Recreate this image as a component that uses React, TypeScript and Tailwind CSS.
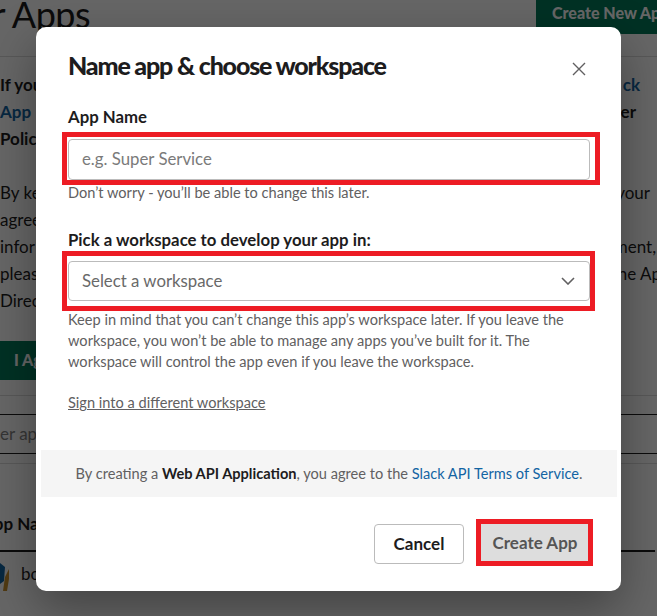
import React from 'react';

const lineClass = 'flex h-[27px] items-center justify-between text-[17px] text-[#1d1c1d]';

const App: React.FC = () => {
  return (
    <div className="relative h-[616px] w-[657px] overflow-hidden bg-white font-['Lato',sans-serif]">
      {/* Page behind the dialog */}
      <div className="flex h-[57px] items-start justify-between border-b border-[#ddd]">
        <h1 className="mt-[-4px] ml-[-65px] text-[36px] leading-[36px] font-normal tracking-[-0.5px] text-[#1d1c1d]">Your Apps</h1>
        <div className="h-[34px] w-[121px] overflow-hidden rounded-bl-sm bg-[#007a5a] pt-[1px] pl-4 text-[16px] font-black whitespace-nowrap text-white">Create New App</div>
      </div>
      <div className="pt-[14px]">
        <div className={lineClass}><span className="font-bold">If you</span><span className="mr-[17px] font-bold text-[#1264a3]">ck</span></div>
        <div className={lineClass}><span className="font-bold text-[#1264a3]">App</span><span className="mr-[21px] font-bold">er</span></div>
        <div className={lineClass}><span className="font-bold">Polic</span></div>
        <div className="h-[27px]" />
        <div className={lineClass}><span>By ke</span><span className="mr-[7px]">your</span></div>
        <div className={lineClass}><span>agree</span></div>
        <div className={lineClass}><span>infor</span><span className="mr-[1px]">ment,</span></div>
        <div className={lineClass}><span>pleas</span><span className="mr-[-8px]">he Api</span></div>
        <div className={lineClass}><span>Direc</span></div>
      </div>
      <div className="mt-[27px] flex h-[39px] w-[60px] items-center rounded-r bg-[#007a5a] pb-[2px] pl-[14px] text-[16px] font-black whitespace-nowrap text-white">I Agree</div>
      <div className="mt-[15px] h-[19px] border-t border-[#ddd]" />
      <div className="flex h-[40px] items-center border-y border-[#1d1c1d] text-[17px] text-[#868686]">er apps</div>
      <div className="h-[10px] border-b border-[#ddd]" />
      <div className="mt-[47px] mr-[2px] border-b-2 border-[#1d1c1d] pb-[13px] text-[17px] font-bold text-[#1d1c1d]">
        <span className="ml-[-18px]">App Name</span>
      </div>
      <div className="mt-[9px] flex items-center gap-[12px] text-[17px] text-[#1d1c1d]">
        <svg width="9" height="30" viewBox="0 0 9 30" className="shrink-0">
          <path d="M0 2l5 4-1 14-4 3z" fill="#1264a3" />
          <path d="M9 8v10l-2 12H3l2-14z" fill="#c9922e" />
        </svg>
        <span className="mb-[4px]">bot</span>
      </div>

      {/* Dim layer */}
      <div className="absolute inset-0 bg-black/60" />

      {/* Dialog */}
      <div className="absolute top-[27px] left-[36px] flex h-[564px] w-[585px] flex-col rounded-[10px] bg-white pr-[4px] pl-[5px] shadow-[0_18px_48px_rgba(0,0,0,0.35)]">
        <div className="flex items-start justify-between pt-[20px] pr-[31px] pl-[27px]">
          <h2 className="text-[25px] leading-[36px] font-black tracking-[-1.18px] text-[#1d1c1d]">Name app &amp; choose workspace</h2>
          <svg width="14" height="14" viewBox="0 0 14 14" className="mt-[15px]" fill="none" stroke="#616061" strokeWidth="1.4">
            <path d="M1 1l12 12M13 1L1 13" />
          </svg>
        </div>

        <div className="flex-1 px-[27px]">
          <label className="mt-[22px] block text-[16.8px] leading-[24px] font-bold text-[#1d1c1d]">App Name</label>
          <div className="relative mt-[10px]">
            <div className="flex h-[41px] items-center rounded-[4px] border border-[#bbbbbb] pb-[1px] pl-[13px] text-[16.8px] text-[#7a7a7a]">e.g. Super Service</div>
            <div className="absolute -top-[7px] -right-[10px] -bottom-[5px] -left-[6px] border-[5px] border-[#ed1c24]" />
          </div>
          <p className="mt-[2px] text-[14.6px] leading-[22px] text-[#616061]">Don’t worry - you’ll be able to change this later.</p>

          <label className="mt-[24px] block text-[16.8px] leading-[24px] font-bold text-[#1d1c1d]">Pick a workspace to develop your app in:</label>
          <div className="relative mt-[9px]">
            <div className="flex h-[40px] items-center justify-between rounded-[4px] border border-[#bbbbbb] pr-[14px] pl-[13px] text-[16.8px] text-[#696969]">
              <span>Select a workspace</span>
              <svg width="14" height="8" viewBox="0 0 14 8" fill="none" stroke="#616061" strokeWidth="1.6">
                <path d="M1 1l6 6 6-6" />
              </svg>
            </div>
            <div className="absolute -top-[10px] -right-[5px] -bottom-[10px] -left-[6px] border-[5px] border-[#ed1c24]" />
          </div>
          <p className="mt-[8px] text-[14.6px] leading-[21px] whitespace-nowrap text-[#616061]">
            Keep in mind that you can’t change this app’s workspace later. If you leave the
            <br />
            workspace, you won’t be able to manage any apps you’ve built for it. The
            <br />
            workspace will control the app even if you leave the workspace.
          </p>
          <a className="mt-[20px] block text-[14.6px] leading-[22px] text-[#616061] underline">Sign into a different workspace</a>
        </div>

        <div className="flex h-[47px] items-center justify-center bg-[#f5f5f5] text-[14.6px] text-[#616061]">
          <span>
            By creating a <b className="font-bold text-[#1d1c1d]">Web API Application</b>, you agree to the <a className="text-[#1264a3]">Slack API Terms of Service</a>.
          </span>
        </div>

        <div className="flex h-[94px] items-start justify-end gap-[17px] pt-[27px] pr-[28px]">
          <button className="h-[40px] w-[90px] rounded-[4px] border border-[#bbbbbb] bg-white text-[17px] font-bold text-[#1d1c1d]">Cancel</button>
          <div className="relative">
            <button className="h-[37px] w-[108px] bg-[#dddddd] text-[17px] font-bold text-[#555555]">Create App</button>
            <div className="absolute -top-[5px] -right-[4px] -bottom-[5px] -left-[5px] border-[5px] border-[#ed1c24]" />
          </div>
        </div>
      </div>
    </div>
  );
};

export default App;
